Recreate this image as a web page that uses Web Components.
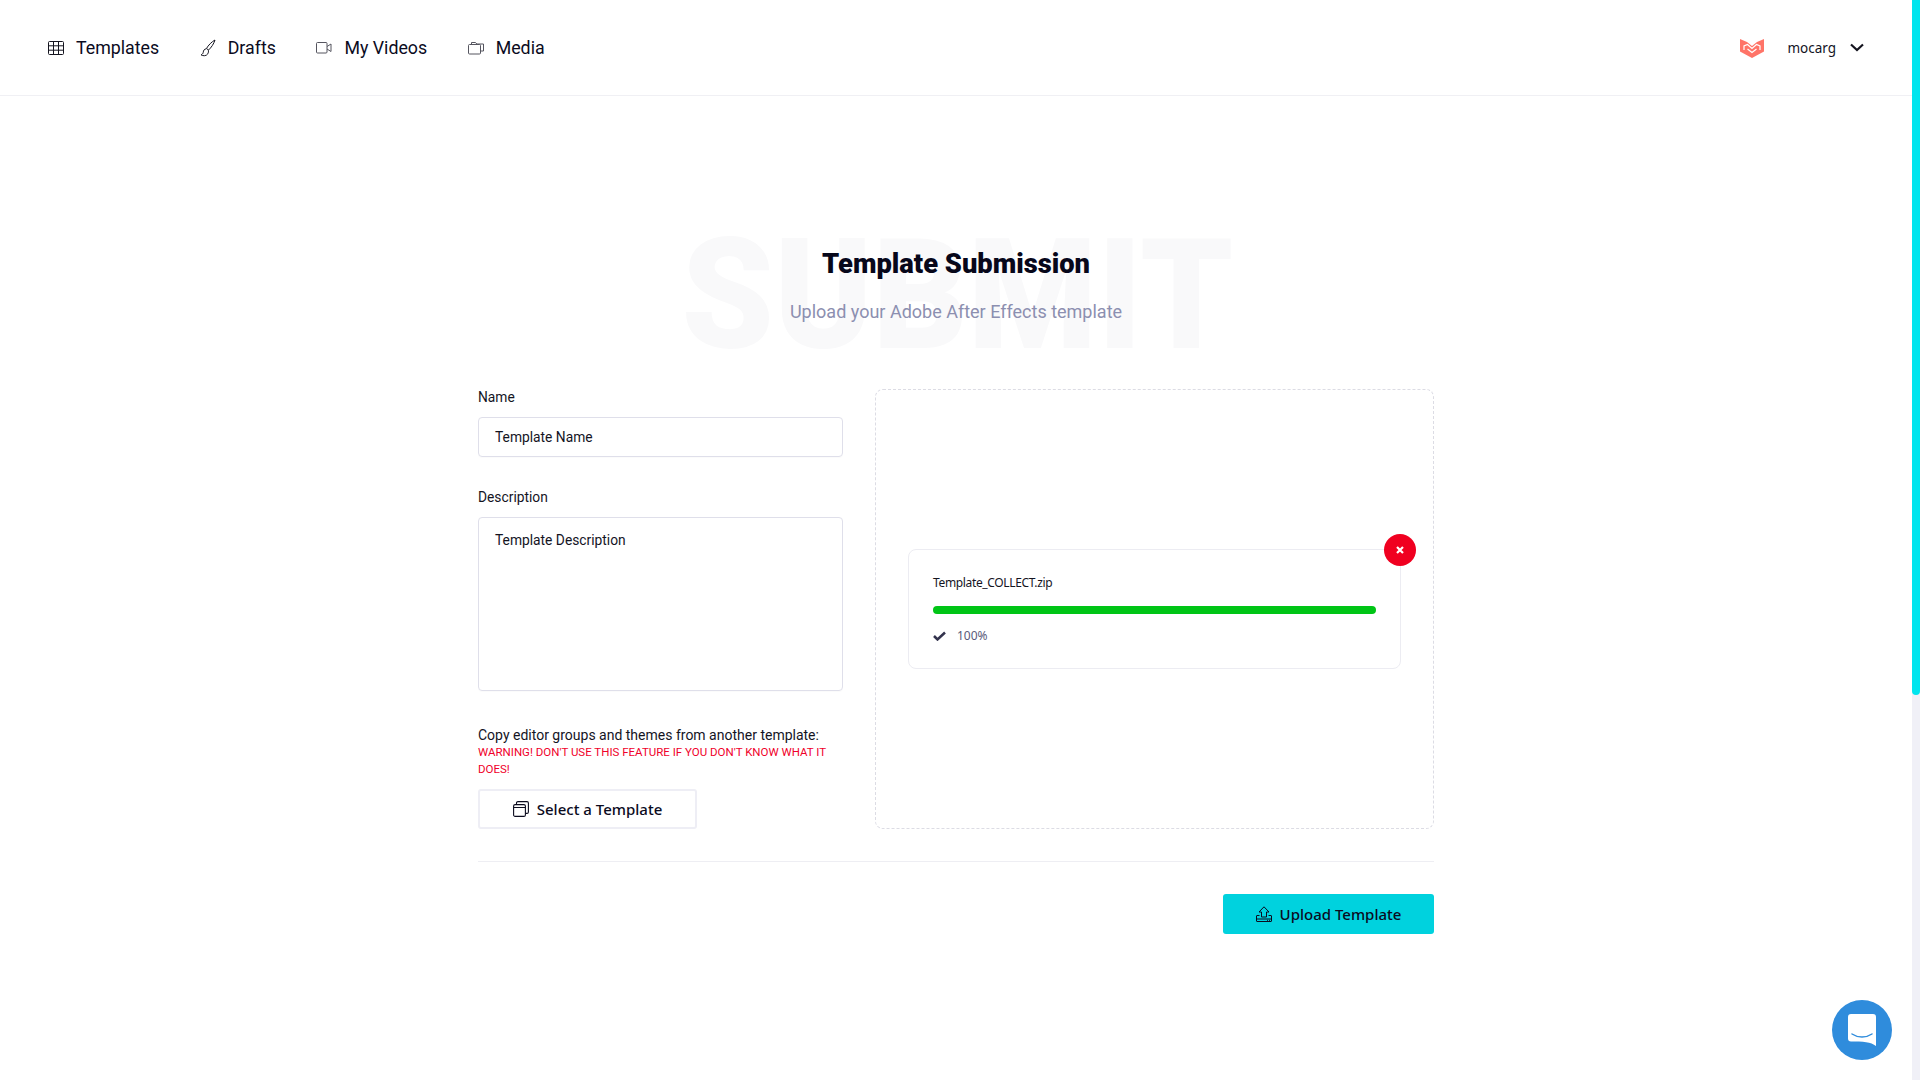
<!DOCTYPE html>
<html lang="en">
<head>
<meta charset="utf-8">
<title>Template Submission</title>
<style>
html,body{margin:0;height:100%;background:#fff;overflow:hidden}
body{font-family:Roboto,"Liberation Sans",sans-serif;color:#0b0b1e}
</style>
</head>
<body>
<app-shell>
    <top-nav></top-nav>
    <submit-page></submit-page>
</app-shell>
<chat-bubble></chat-bubble>

<script>
const icons = {
    grid: `<svg width="16" height="14" viewBox="0 0 16 14" fill="none" stroke="#14141f" stroke-width="1"><rect x=".5" y=".5" width="15" height="13" rx="1"/><path d="M.5 4.800h15M.5 9.200h15M5.500.5v13M10.500.5v13"/></svg>`,
    brush: `<svg width="16" height="18" viewBox="0 0 16 18" fill="none" stroke="#14141f" stroke-width="1"><path d="M15 1C12 2.500 8 6.500 6.500 9.500L8.500 11C11 9 14 4.500 15 1Z"/><path d="M6.300 9.800C4 10 3.600 11.500 3.200 13.500C3 14.800 2 15.500 1 15.800C3 17.300 6.500 17 7.800 14.800C8.500 13.500 8.700 12.200 8.300 11.200"/></svg>`,
    video: `<svg width="16" height="14" viewBox="0 0 16 14" fill="none" stroke="#55555f" stroke-width="1"><rect x=".5" y="1.500" width="10.500" height="10.500" rx="1"/><path d="M11 5.500L15 3V10.500L11 8"/></svg>`,
    media: `<svg width="16" height="14" viewBox="0 0 16 14" fill="none" stroke="#55555f" stroke-width="1"><path d="M3.500 3.500V1.500H7.500L8.800 3H15.500V10H12.500"/><rect x=".5" y="3.500" width="12" height="9.500" rx="1"/></svg>`,
    logo: `<svg width="24" height="20" viewBox="0 0 24 20"><path fill="#ff7468" d="M0 1L7 4L12 8L17 4L24 1V13.500L12 20L0 13.500Z"/><path fill="none" stroke="#fff" stroke-width="1.200" d="M4 12V8L7.500 6.500L12 10.500L16.500 6.500L20 8V12M7.500 11L12 14.500L16.500 11"/></svg>`,
    chevron: `<svg width="14" height="9" viewBox="0 0 14 9" fill="none" stroke="#14141f" stroke-width="2.200"><path d="M1 1.500L7 7L13 1.500"/></svg>`,
    copy: `<svg width="16" height="16" viewBox="0 0 16 16" fill="none" stroke="#0b0b1e" stroke-width="1.100"><rect x=".6" y="3.600" width="11.800" height="11.800" rx="1.500"/><path d="M.6 6.500H12.400M3.500 3.500V2A1.400 1.400 0 0 1 5 .6H14A1.400 1.400 0 0 1 15.400 2V11A1.400 1.400 0 0 1 14 12.400H12.500"/></svg>`,
    upload: `<svg width="16" height="16" viewBox="0 0 16 16" fill="none" stroke="#0b0b1e" stroke-width="1"><path d="M8 .8L13 6H10.500V11H5.500V6H3Z"/><path d="M3.500 9.500H1A.5.5 0 0 0 .5 10V15A.5.5 0 0 0 1 15.500H15A.5.5 0 0 0 15.500 15V10A.5.5 0 0 0 15 9.500H12.500M.5 13H15.500M11 14.300H12M13 14.300H14"/></svg>`,
    check: `<svg width="13" height="10" viewBox="0 0 13 10" fill="none" stroke="#33334d" stroke-width="2.500"><path d="M1 5L4.500 8.500L12 1.500"/></svg>`
}

class AppShell extends HTMLElement{
    constructor(){
        super()
        this.attachShadow({mode: 'open'})
        this.shadowRoot.innerHTML = `
            <style>
                :host{display:flex;height:1080px}
                .content{flex:1;min-width:0}
                .track{width:8px;background:#f0f0f7}
                .thumb{height:695px;background:#00e5ee;border-radius:0 0 4px 4px}
            </style>
            <div class="content"><slot></slot></div>
            <div class="track"><div class="thumb"></div></div>
        `
    }
}

class TopNav extends HTMLElement{
    constructor(){
        super()
        this.attachShadow({mode: 'open'})
        this.shadowRoot.innerHTML = `
            <style>
                :host{display:flex;align-items:center;justify-content:space-between;border-bottom:1px solid #f0f0f4;padding:0 48px 0 48px;box-sizing:border-box;height:96px}
                .links{display:flex;gap:40.500px}
                .user{display:flex;align-items:center}
                .name{font:13.500px "Noto Sans",sans-serif;margin:0 14px 0 23px;color:#14141f}
                svg{display:block}
            </style>
            <div class="links">
                <nav-item label="Templates" icon="grid"></nav-item>
                <nav-item label="Drafts" icon="brush"></nav-item>
                <nav-item label="My Videos" icon="video"></nav-item>
                <nav-item label="Media" icon="media"></nav-item>
            </div>
            <div class="user">
                ${icons.logo}
                <span class="name">mocarg</span>
                ${icons.chevron}
            </div>
        `
    }
}

class NavItem extends HTMLElement{
    constructor(){
        super()
        this.attachShadow({mode: 'open'})
    }
    connectedCallback(){
        this.shadowRoot.innerHTML = `
            <style>
                :host{display:flex;align-items:center;gap:12px;font:17.800px Roboto,sans-serif;color:#0b0b1e}
                svg{display:block}
            </style>
            ${icons[this.getAttribute('icon')]}
            <span>${this.getAttribute('label')}</span>
        `
    }
}

class SubmitPage extends HTMLElement{
    constructor(){
        super()
        this.attachShadow({mode: 'open'})
        this.shadowRoot.innerHTML = `
            <style>
                :host{display:block;width:956px;margin:0 auto;padding-top:151px}
                .head{position:relative;text-align:center;height:142px}
                .ghost{position:absolute;left:0;right:0;top:-28px;text-align:center;font:900 154px/1 Roboto,sans-serif;color:#f9f9fa;white-space:nowrap;transform:scaleX(.96);text-indent:3px}
                h1{position:relative;margin:0;font:900 27.300px/34px Roboto,sans-serif;color:#07071a}
                p{position:relative;margin:19px 0 0;font:18px/24px Roboto,sans-serif;color:#8c8fb0}
                .cols{display:grid;grid-template-columns:365px 559px;gap:32px}
                .left{display:flex;flex-direction:column}
                .copy{margin-top:35px;font:14px/18px Roboto,sans-serif;color:#14141f}
                .warn{display:block;font:11.500px/17px Roboto,sans-serif;color:#f0002a;text-transform:uppercase;margin-bottom:11px}
                .drop{border:1px dashed #dcdce4;border-radius:8px;height:440px;box-sizing:border-box;display:flex;align-items:center;justify-content:center}
                hr{border:0;border-top:1px solid #eeeef3;margin:32px 0}
                .foot{display:flex;justify-content:flex-end}
            </style>
            <div class="head">
                <div class="ghost">SUBMIT</div>
                <h1>Template Submission</h1>
                <p>Upload your Adobe After Effects template</p>
            </div>
            <div class="cols">
                <div class="left">
                    <text-field label="Name" value="Template Name" height="40"></text-field>
                    <text-field label="Description" value="Template Description" height="174" style="margin-top:32px"></text-field>
                    <div class="copy">Copy editor groups and themes from another template:
                        <span class="warn">Warning! Don't use this feature if you don't know what it does!</span>
                    </div>
                    <action-button icon="copy" style="width:219px">Select a Template</action-button>
                </div>
                <div class="drop"><upload-card></upload-card></div>
            </div>
            <hr>
            <div class="foot"><action-button icon="upload" primary style="width:211px">Upload Template</action-button></div>
        `
    }
}

class TextField extends HTMLElement{
    constructor(){
        super()
        this.attachShadow({mode: 'open'})
    }
    connectedCallback(){
        const h = this.getAttribute('height')
        this.shadowRoot.innerHTML = `
            <style>
                :host{display:block}
                label{display:block;font:13.800px/20px Roboto,sans-serif;color:#14141f;margin-bottom:10px;margin-top:-2px}
                .box{box-sizing:border-box;height:${h}px;border:1px solid #dfdfea;border-radius:4px;padding:${h > 50 ? 12 : 0}px 16px;font:13.800px/${h > 50 ? 20 : 38}px Roboto,sans-serif;color:#14141f;box-shadow:0 1px 1px rgba(0,0,0,.02)}
            </style>
            <label>${this.getAttribute('label')}</label>
            <div class="box">${this.getAttribute('value')}</div>
        `
    }
}

class ActionButton extends HTMLElement{
    constructor(){
        super()
        this.attachShadow({mode: 'open'})
    }
    connectedCallback(){
        const primary = this.hasAttribute('primary')
        this.shadowRoot.innerHTML = `
            <style>
                :host{display:flex;align-items:center;justify-content:center;gap:8px;box-sizing:border-box;height:40px;border-radius:3px;font:500 15px "Noto Sans",sans-serif;color:#0b0b1e;
                    background:${primary ? '#00d2de' : '#fff'};border:${primary ? '0' : '2px solid #eeeef5'}}
                svg{display:block}
            </style>
            ${icons[this.getAttribute('icon')]}
            <slot></slot>
        `
    }
}

class UploadCard extends HTMLElement{
    constructor(){
        super()
        this.attachShadow({mode: 'open'})
        this.shadowRoot.innerHTML = `
            <style>
                :host{display:block;position:relative;box-sizing:border-box;width:493px;height:120px;border:1px solid #ececf2;border-radius:8px;padding:24px 24px 0}
                .file{font:12px/18px "Noto Sans",sans-serif;color:#14141f;letter-spacing:-.35px}
                .bar{height:8px;border-radius:4px;background:#00c516;margin:14px 0 13px}
                .status{display:flex;align-items:center;gap:11px;font:12px/18px "Noto Sans",sans-serif;color:#5a5a7a}
                svg{display:block}
                .close{position:absolute;top:-16px;right:-16px;width:32px;height:32px;border-radius:50%;background:#f00020;display:flex;align-items:center;justify-content:center}
            </style>
            <div class="file">Template_COLLECT.zip</div>
            <div class="bar"></div>
            <div class="status">${icons.check}<span>100%</span></div>
            <div class="close"><svg width="8" height="8" viewBox="0 0 8 8" stroke="#fff" stroke-width="2.200"><path d="M1 1L7 7M7 1L1 7"/></svg></div>
        `
    }
}

class ChatBubble extends HTMLElement{
    constructor(){
        super()
        this.attachShadow({mode: 'open'})
        this.shadowRoot.innerHTML = `
            <style>
                :host{position:fixed;left:1832px;top:1000px;width:60px;height:60px;border-radius:50%;background:#2f8cdc;display:flex;align-items:center;justify-content:center}
                svg{display:block}
            </style>
            <svg width="28" height="32" viewBox="0 0 28 32"><path fill="#fff" d="M3 0H25A3 3 0 0 1 28 3V32C23 28 15 27.500 3 27.500A3 3 0 0 1 0 24.500V3A3 3 0 0 1 3 0Z"/><path fill="none" stroke="#2f8cdc" stroke-width="1.500" stroke-linecap="round" d="M4 20C10 24 18 24 24 20"/></svg>
        `
    }
}

customElements.define('app-shell', AppShell)
customElements.define('top-nav', TopNav)
customElements.define('nav-item', NavItem)
customElements.define('submit-page', SubmitPage)
customElements.define('text-field', TextField)
customElements.define('action-button', ActionButton)
customElements.define('upload-card', UploadCard)
customElements.define('chat-bubble', ChatBubble)
</script>
</body>
</html>
